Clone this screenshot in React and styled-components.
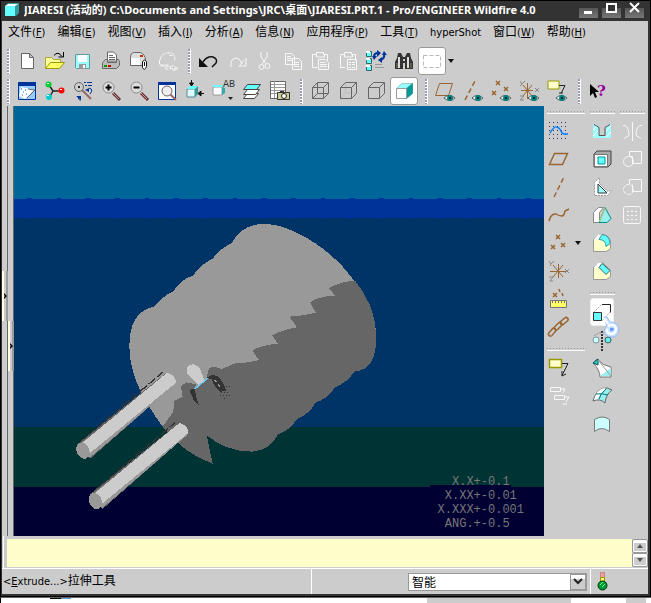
import React from 'react';
import styled, { createGlobalStyle, css } from 'styled-components';

const GlobalStyle = createGlobalStyle`
    * {
        box-sizing: border-box;
    }
    body {
        margin: 0;
        background: #fff;
        color: #000;
        font-family: "DejaVu Sans Condensed", "Noto Sans", "Noto Sans CJK SC", sans-serif;
        font-size: 12px;
    }
    button {
        margin: 0;
        padding: 0;
        border: 0;
        background: none;
        color: inherit;
        font: inherit;
    }
`;

const Page = styled.div`
    display: flex;
    flex-direction: column;
    min-height: 100vh;
    border-bottom: 1px solid #000;
`;
const Window = styled.div`
    display: flex;
    flex: 1;
    flex-direction: column;
    background: #ccc;
    border: solid #333;
    border-width: 0 3px 3px 2px;
    outline: 1px solid #000;
    outline-offset: -1px;
`;
const Desktop = styled.div`
    display: flex;
    height: 7px;
    padding-left: 49px;
    border-top: 1px solid #666;
    border-left: 1px solid #000;
`;
const DesktopMark = styled.i`
    width: ${p => p.w}px;
    height: ${p => p.h}px;
    margin-right: ${p => p.gap}px;
    background: ${p => p.color};
`;
// latin letters run one size under the chinese ones
const Latin = styled.span`
    font-size: 11px;
`;

/* title */
const TitleBar = styled.header`
    display: flex;
    align-items: center;
    height: 21px;
    padding: 0 4px 3px 2px;
    background: #333;
    border-top: 1px solid #000;
    color: #fff;
`;
const Title = styled.h1`
    flex: 1;
    margin: 0 0 0 4px;
    overflow: hidden;
    white-space: nowrap;
    font-family: "Noto Sans", "Noto Sans CJK SC", sans-serif;
    font-size: 11px;
    line-height: 16px;
    font-weight: bold;
`;
const WindowButtons = styled.div`
    display: flex;
    gap: 4px;
`;
const WindowButton = styled.button`
    width: 19px;
    height: 17px;
    background: linear-gradient(#333 7px, #555 7px, #777);
    svg {
        display: block;
    }
`;

/* menu */
const MenuBar = styled.nav`
    display: flex;
    gap: 12px;
    height: 25px;
    padding: 0 6px 3px;
`;
const MenuItem = styled.button`
    white-space: nowrap;
    line-height: 20px;
`;

/* toolbars */
const ToolRow = styled.div`
    display: flex;
    align-items: center;
    height: 30px;
`;
const Grip = styled.i`
    flex: none;
    background: radial-gradient(circle at 1px 1px, #99b 1px, #fff 1px) 0 0 / 3px 3px;
    ${p => p.flat ? css`
        height: 3px;
        margin: ${p.first ? 5 : 7}px 0 3px;
        border-bottom: 1px solid #fff;
        background: repeating-linear-gradient(90deg, #99a 0 1px, #ccc 1px 3px) 0 0 / 100% 1px no-repeat;
    ` : css`
        width: 3px;
        height: 25px;
        margin: 0 3px 0 ${p.first ? 5 : 7}px;
    `}
`;
const Tool = styled.button`
    position: relative;
    display: flex;
    flex: none;
    align-items: center;
    justify-content: center;
    width: ${p => p.$narrow ? 24 : 28}px;
    height: 28px;
    ${p => p.$active && css`
        background: #fff;
        border: 1px solid ${p.$narrow ? '#eee' : '#999'};
        border-radius: 3px;
    `}
    svg {
        flex: none;
    }
`;
const DropArrow = styled.button`
    width: 10px;
    height: 28px;
    svg {
        display: block;
        margin: auto;
    }
`;
const Pointer = styled.svg`
    position: absolute;
    top: 17px;
    left: 10px;
    z-index: 1;
`;

/* middle */
const Main = styled.main`
    display: flex;
    flex: 1;
    min-height: 430px;
`;
const Sash = styled.div`
    flex: none;
    width: 6px;
    padding-top: ${p => p.top}px;
    border-right: 1px solid #666;
`;
const SashButton = styled.button`
    display: flex;
    align-items: center;
    width: 6px;
    height: 50px;
    background: #ccc;
    border-left: 2px solid #ffffe6;
    border-right: 2px solid #999;
    svg {
        flex: none;
    }
`;
const Viewport = styled.section`
    position: relative;
    flex: 1;
    min-width: 0;
    background: #000033;
`;
const Scene = styled.svg`
    display: block;
    width: 100%;
    height: 100%;
    shape-rendering: crispEdges;
`;
const Tolerance = styled.pre`
    position: absolute;
    right: 20px;
    bottom: 5px;
    margin: 0;
    color: #777;
    font: 12px/14px "Liberation Mono", monospace;
    text-align: center;
`;
const Feature = styled.aside`
    display: grid;
    grid-template-columns: 38px 25px 25px;
    align-content: start;
    gap: 5px;
    width: 104px;
    padding-left: 3px;
`;
const ToolColumn = styled.div`
    display: flex;
    flex-direction: column;
`;
const ToolLine = styled.div`
    display: flex;
    gap: 2px;
`;

/* bottom */
const Message = styled.div`
    display: flex;
    height: 32px;
    padding: 3px 0 1px 5px;
    background: linear-gradient(90deg, #ccc 1px, #fff 1px, #fff 2px, #ccc 2px);
`;
const MessageText = styled.output`
    flex: 1;
    background: #ffffcc;
`;
const Scroll = styled.div`
    display: grid;
    grid-template-rows: 1fr 1fr;
    width: 16px;
`;
const ScrollButton = styled.button`
    display: flex;
    align-items: center;
    justify-content: center;
    background: linear-gradient(#fff 3px, #ccc 3px);
    border: 1px solid #999;
    border-radius: 2px;
    box-shadow: inset 0 0 0 1px #fff;
`;
const StatusBar = styled.footer`
    display: flex;
    height: 26px;
    border-top: 1px solid #fff;
    line-height: 24px;
`;
const Hint = styled.div`
    flex: 0 0 48%;
    border-right: 1px solid #fff;
    padding-left: 1px;
`;
const FilterBox = styled.div`
    display: flex;
    flex: 1;
    align-items: center;
    justify-content: flex-end;
    padding-right: 3px;
    border-right: 1px solid #fff;
`;
const FilterField = styled.div`
    position: relative;
    width: 179px;
    height: 18px;
`;
const Filter = styled.select`
    display: block;
    width: 100%;
    height: 18px;
    padding: 0 3px;
    appearance: none;
    background: #fff;
    border: 1px solid #999;
    border-radius: 0;
    color: #000;
    font: 12px/14px "Noto Sans CJK SC", sans-serif;
`;
const FilterArrow = styled.span`
    position: absolute;
    top: 1px;
    right: 1px;
    display: flex;
    align-items: center;
    justify-content: center;
    width: 16px;
    height: 16px;
    background: linear-gradient(#fff 4px, #ccc 4px);
    border: 1px solid #999;
    pointer-events: none;
`;
const Light = styled.div`
    width: 57px;
    padding: 1px 0 0 2px;
`;

const G = '#666';
const W = '#f8f8f8';
const B = '#996633';

const Eye = () => (
    <g>
        <path d="M11 19q5-5 11 0q-5 5-11 0z" fill="#fff" stroke="#555" />
        <circle cx="17" cy="19" r="3" fill="#008080" />
        <path d="M16 18h2v2h-2z" fill="#033" />
    </g>
);
const Lens = () => (
    <g>
        <path d="M14 14l7 7" stroke="#633" strokeWidth="3" />
        <path d="M14 14l6 6" stroke="#c99" />
        <circle cx="9.500" cy="8.500" r="5.500" fill="#ddd" stroke="#888" />
    </g>
);
const wire = 'M4.5 8.5h11v11h-11zM4.5 8.5l5-5h11l-5 5M20.5 3.5v11l-5 5';

const icons = {
    new: <path d="M6.5 4.5h8l4 4v11h-12zM14.5 4.5v4h4" fill="#fff" stroke={G} />,
    open: <g>
        <path d="M2.5 19.5v-11h6l2 2h7v4" fill="#ffff99" stroke="#aa3" />
        <path d="M2.5 19.5l5-6h14l-5 6z" fill="#ffff66" stroke="#990" />
        <path d="M11 6.500q4-5 8 1M20.500 3v5h-5" fill="none" stroke="#000" />
    </g>,
    save: <g>
        <path d="M4.5 5.5h14v14h-13l-1-1z" fill="#99ffff" stroke="#699" />
        <path d="M7 6h9v7H7z" fill="#fff" />
        <path d="M8 15h7v5H8z" fill="#999" />
        <path d="M12 16h2v3h-2z" fill="#fff" />
    </g>,
    print: <g>
        <path d="M8.500 12v-9h6l3 3v6z" fill="#fff" stroke={G} />
        <path d="M10 6.500h4M10 8.500h6M10 10.500h6" stroke={G} />
        <path d="M3.500 13.500l3-3h2v3h9v-3h2l1 2v4l-3 3h-14z" fill="#bbb" stroke={G} />
        <path d="M5 16h3v2H5z" fill="#090" /><path d="M9 16h3v2H9z" fill="#c00" />
    </g>,
    mail: <g>
        <path d="M3.500 16.500v-8q0-5 4-5h6q5 2 5 8v5z" fill="#ddd" stroke={G} />
        <path d="M4 9h9v7H4z" fill="#fff" /><path d="M13 6h3v2h-3z" fill="#c30" />
        <path d="M15.500 12.500q2-3 4 0v5q-2 5-4 1z" fill="#fff" stroke="#111" />
        <path d="M17.500 13v4" stroke="#111" />
    </g>,
    mailLink: <path d="M4.500 11v5h9M5 11q1-6 7-7h5q3 2 3 7M14.500 6.500h3M6 17h4M10 19q3-3 6 0q-3 3-6 0M15 18q3-3 6 1q-3 2-6-1M17 21h5v-3" fill="none" stroke={W} strokeDasharray="4 1" />,
    undo: <g>
        <path d="M3 9v9h9z" fill="#111" />
        <path d="M7 13q4-6 10-5q5 2 3 6l-4 4" fill="none" stroke="#111" strokeWidth="1.500" />
    </g>,
    redo: <path d="M7 18v-5q1-4 5-4q4 0 6 6M22 9v8h-8M20 11l-4 5" fill="none" stroke={W} />,
    cut: <g fill="none" stroke={W}>
        <path d="M9 3v5l5 7M15 3v5l-5 7" />
        <circle cx="9.500" cy="18" r="2.500" /><circle cx="15.500" cy="17" r="2.500" />
    </g>,
    copy: <path d="M5.500 4.500h6l3 3v8h-9zM7 7.500h4M7 9.500h5M7 11.500h5M12.500 9.500h6l3 3v8h-9zM14 13.500h5M14 15.500h5M14 17.500h5" fill="#ccc" stroke={W} />,
    paste: <path d="M9 18.500H4.500v-13h4v-2h7v2h4v6M8.500 5v3h8v-3M10.500 10.500h7l3 3v7h-10zM12 13.500h5M12 15.500h7M12 17.500h7" fill="#ccc" stroke={W} />,
    pasteSpecial: <path d="M9 18.500H4.500v-13h4v-2h7v2h4v6M8.500 5v3h8v-3M11.500 10.500h9v10h-9zM13 13.500h2M16 13.500h3M13 15.500h2M16 15.500h3M13 18.500h2M16 18.500h3" fill="#ccc" stroke={W} />,
    regen: <g>
        {[2, 9, 16].map(y => (
            <g key={y}>
                <path d={`M2.500 ${y + .5}h5v5h-5z`} fill="#6ff" stroke="#366" />
                <path d={`M2 ${y}h4v2H2z`} fill="#fff" />
            </g>
        ))}
        <path d="M10 8q0-4 4-4M20 5q1 4-3 6" fill="none" stroke="#003399" strokeWidth="2" />
        <path d="M13 1l4 3-4 4zM8 7h5l-3 4zM18 8v6l-4-3zM18 6h5l-3-4z" fill="#003399" />
        <path d="M11 15.500h7M11 18.500h9" stroke="#999" />
    </g>,
    find: <g>
        <path d="M5 9l1-5h3l2 4v12H3v-7zM19 9l-1-5h-3l-2 4v12h8v-7z" fill="#333" />
        <path d="M7 8v11M16 8v11" stroke="#ddd" strokeWidth="2" />
        <path d="M5 14v5M19 14v5" stroke="#886" />
        <path d="M10 8h4v6h-4z" fill="#333" /><path d="M11 10h2v2h-2z" fill="#ccc" />
    </g>,
    pick: <path d="M3.500 6.500h17v12h-17z" fill="none" stroke="#bbb" strokeDasharray="4 2" />,
    sketchView: <g>
        <path d="M3.500 3.500h17v17h-17z" fill="#99ccff" stroke="#003399" />
        <path d="M3 3h18v4H3z" fill="#003399" />
        <path d="M6 8l5 1 8 2-9 9-6-3z" fill="#fff" />
        <path d="M6 10h1M8 13h1M10 11h1M7 16h1M11 15h1" stroke="#06c" />
        <path d="M13 10l7 1-8 8" fill="none" stroke="#666" />
    </g>,
    orient: <g>
        <path d="M6 6l4 6h9M10 12l-4 7" fill="none" stroke="#222" strokeWidth="1.500" />
        <circle cx="5.500" cy="5.500" r="3" fill="#0c3" /><path d="M4 4h2v1H4z" fill="#fff" />
        <circle cx="18.500" cy="11.500" r="3" fill="#f00" /><path d="M17 10h2v1h-2z" fill="#fff" />
        <circle cx="6" cy="18" r="3" fill="#0cc" /><path d="M4 16h2v1H4z" fill="#fff" />
    </g>,
    spin: <g>
        <path d="M11 11l9 9" stroke="#966" strokeWidth="2" />
        <circle cx="8" cy="8" r="4.500" fill="#ccc" stroke={G} /><path d="M7 7h2v2H7z" fill="#222" />
        <path d="M13 3.500h2M16 3.500h5M14 6.500h2M17 6.500h4" stroke="#003399" />
        <path d="M18 9q5 1 1 6M8 17q-2 4 2 4" fill="none" stroke="#003399" />
        <path d="M14 11l4-2v4zM5 17h5v4z" fill="#003399" />
    </g>,
    zoomIn: <g><Lens /><path d="M6.500 8.500h6M9.500 5.500v6" stroke="#000" strokeWidth="2" /></g>,
    zoomOut: <g><Lens /><path d="M6.500 8.500h6" stroke="#000" strokeWidth="2" /></g>,
    refit: <g>
        <path d="M3.500 4h17v16.500h-17z" fill="#fff" stroke="#003399" />
        <path d="M3 3h18v3H3z" fill="#003399" />
        <path d="M15 15l6 6" stroke="#966" strokeWidth="2" />
        <circle cx="12" cy="12" r="5" fill="#eee" stroke={G} />
    </g>,
    annot: <g>
        <path d="M4 10h8v8H4z" fill="#dff" stroke="#588" />
        <path d="M4 10l3-3h8l-3 3z" fill="#6ff" /><path d="M12 10l3-3v8l-3 3z" fill="#399" />
        <path d="M8.500 1v4M6.500 4l2 3 2-3zM21 14.500h-4M18 12l-3 2.500 3 2.500z" stroke="#111" fill="#111" />
    </g>,
    views: <g>
        <path d="M2 8h9v8H2z" fill="#fff" stroke="#999" /><path d="M2 6h11l-2 2H2z" fill="#6ff" />
        <path d="M11 8l3 1v5l-3 2z" fill="#3aa" />
        <text x="12" y="8" fill="#333" fontFamily="Liberation Mono" fontSize="10">AB</text>
        <path d="M17 18h5l-2.500 3z" fill="#222" />
    </g>,
    layers: <g stroke="#444">
        <path d="M4.500 19.500l4-5h11l-4 5z" fill="#fff" />
        <path d="M4.500 15.500l4-5h12l-4 5z" fill="#fff" />
        <path d="M4.500 10.500l4-5h13l-4 5z" fill="#6ff" />
    </g>,
    viewMgr: <g>
        <path d="M3.500 2.500h15v17h-15z" fill="#fff" stroke={G} />
        <path d="M4 5.500h14M4 8.500h14M4 11.500h14M4 14.500h8M7.500 2v17" stroke="#999" />
        <path d="M10.500 13.500h12v7h-12z" fill="#cccc99" stroke="#333" />
        <path d="M13 12h4v2h-4z" fill="#333" />
        <circle cx="17" cy="17" r="2.500" fill="#fff" stroke="#222" />
    </g>,
    wireframe: <path d={wire + 'M9.500 3.500v11h11M9.500 14.500l-5 5'} fill="none" stroke={G} />,
    hidden: <g fill="none">
        <path d="M9.500 4v10h11M9 15l-4 4" stroke="#bbb" /><path d={wire} stroke={G} />
    </g>,
    noHidden: <path d={wire} fill="none" stroke={G} />,
    shaded: <g>
        <path d="M4.500 9.500l5-5h11l-5 5z" fill="#9ff" stroke="#9cc" />
        <path d="M14.500 9.500l6-5v10l-6 5z" fill="#099" stroke="#399" />
        <path d="M4.500 9.500h10v10h-10z" fill="#fff" stroke="#999" />
    </g>,
    planeEye: <g><path d="M2.500 16.500l4-12h13l-4 12z" fill="none" stroke={B} /><Eye /></g>,
    axisEye: <g><path d="M4 21L14 2" stroke={B} strokeWidth="1.500" strokeDasharray="5 3" /><Eye /></g>,
    pointEye: <g><path d="M7 2l4 4M11 2l-4 4M3 12l4 4M7 12l-4 4M15 8l4 4M19 8l-4 4" stroke={B} strokeWidth="1.500" /><Eye /></g>,
    csysEye: <g>
        <path d="M10.500 4v16M4 11.500h12M6 6l9 11M15 6L6 17" stroke={B} />
        <path d="M3 2l2 3 3-3M5 5l-2 2M18 9l4 4M22 9l-4 4M3 17h4l-4 4h4" fill="none" stroke="#888" /><Eye />
    </g>,
    noteEye: <g>
        <path d="M3 2h11v8H3z" fill="#ffffcc" stroke="#990" />
        <path d="M14 6.500h6l-4 8M14 14h4" fill="none" stroke="#222" /><Eye />
    </g>,
    help: <g>
        <path d="M4 5v12l3-3 2 5 2-1-2-5h4z" fill="#000" />
        <text x="11" y="17" fill="#909" fontFamily="DejaVu Serif" fontWeight="bold" fontSize="15">?</text>
    </g>,
    sketch: <g>
        {[3, 7, 11, 15, 19].map(y => (
            <path key={y} d={`M2 ${y}.500h20`} stroke="#336" strokeDasharray="1 3" />
        ))}
        <path d="M3 14q4-7 7-6q3 1 5 6l2 1h4" fill="none" stroke="#0080ff" strokeWidth="1.500" />
    </g>,
    plane: <path d="M2.500 17.500l5-11h13l-5 11z" fill="none" stroke={B} strokeWidth="1.500" />,
    axis: <path d="M7 22L17 2" stroke={B} strokeWidth="1.500" strokeDasharray="5 3" />,
    curve: <path d="M2 18q2-8 7-7q3 2 6 2q2 0 3-5l4-2" fill="none" stroke={B} strokeWidth="1.500" />,
    points: <path d="M9 4l4 4M13 4l-4 4M4 14l4 4M8 14l-4 4M14 12l4 4M18 12l-4 4" stroke={B} strokeWidth="1.500" />,
    csys: <g>
        <path d="M11.500 5v14M3 12.500h16M6 6l10 12M16 6L6 18" stroke={B} />
        <path d="M2 2l2 3 3-3M4 5l-1 2M18 10l4 4M22 10l-4 4M2 18h4l-3 4h3" fill="none" stroke="#888" />
    </g>,
    analysis: <g>
        <path d="M6 6l4 4M10 6l-4 4M12 2l1 3M15 6l1 3" stroke={B} strokeWidth="1.500" />
        <path d="M3.500 13.500h16v7h-16z" fill="#ffff66" stroke="#777" />
        <path d="M5.500 14v2M8.500 14v2M11.500 14v2M14.500 14v2M17.500 14v2" stroke="#777" />
    </g>,
    chain: <g fill="none" stroke={B} strokeWidth="1.500">
        <rect x="1" y="15" width="9" height="4" rx="2" transform="rotate(-50 5.500 17.500)" />
        <rect x="7" y="9" width="9" height="4" rx="2" transform="rotate(-45 11.500 11.500)" />
        <rect x="13" y="4" width="9" height="4" rx="2" transform="rotate(-40 17.500 6.500)" />
    </g>,
    note: <g>
        <path d="M2.500 3.500h12v8h-12z" fill="#ffffcc" stroke="#990" strokeWidth="1.500" />
        <path d="M15 7.500h6l-6 12M15 15v5l4-2" fill="none" stroke="#222" />
    </g>,
    notes: <path d="M3.500 3.500h10v4h-10zM14 5h4l-2 4M7.500 11.500h10v4h-10zM18 13h4l-3 5M16 20h4" fill="none" stroke={W} />,
    hole: <g>
        <path d="M3 5h18v14H3z" fill="#9ff" />
        <path d="M3 11l4-4M3 17l5-5M16 12l5-5M16 18l5-5" stroke="#fff" />
        <path d="M4 5h16l-4 3v9H9V8z" fill="#ccc" />
        <path d="M4 5.500l5 3v8h6v-8l5-3" stroke="#555" />
    </g>,
    shell: <g>
        <path d="M4 7l3-3h14v13l-3 3H4z" fill="#aaa" stroke="#444" />
        <path d="M4.500 7.500h13v12h-13z" fill="#fff" stroke="#777" />
        <path d="M8 10h7v7H8z" fill="#6ff" stroke="#099" />
    </g>,
    rib: <g>
        <path d="M4.500 20.500v-13l5-5v6l8 8 5-1-5 5z" fill="#fff" stroke="#999" strokeDasharray="2 1" />
        <path d="M8 9l9 9H8z" fill="#9ff" stroke="#333" />
    </g>,
    draft: <g>
        <path d="M3.500 9.500l5-5h5l-4 5v10h-6z" fill="#fff" stroke="#888" />
        <path d="M9 19.500l6-15 6 11-4 4z" fill="#9ee" stroke="#088" />
        <path d="M15 5l-6 14" stroke="#cc6" />
    </g>,
    round: <g>
        <path d="M3.500 20.500v-12l5-5h4q8 1 8 9v5l-4 3z" fill="#ffffcc" stroke="#999" />
        <path d="M4 8.500l4-5h4l-3 5z" fill="#fff" />
        <path d="M12 3.500q8 1 8 9l-4 3q0-7-7-7z" fill="#6ff" stroke="#399" />
    </g>,
    chamfer: <g>
        <path d="M3.500 20.500v-12l5-5h4l8 8v6l-4 3z" fill="#ffffcc" stroke="#999" />
        <path d="M4 8.500l4-5h4l-3 5z" fill="#fff" />
        <path d="M12 4.500l8 7-4 4-7-7z" fill="#6ff" stroke="#366" />
    </g>,
    extrude: <g>
        <path d="M3.500 12.500l8-8h9v7l-8 9z" fill="#fff" stroke="#aaa" strokeDasharray="2 1" />
        <path d="M12 4.500h8.500v8" stroke="#222" />
        <path d="M3.500 12.500h8v8h-8z" fill="#6ff" stroke="#333" />
    </g>,
    revolve: <g>
        <path d="M12 3v20" stroke="#000" strokeDasharray="2 1" strokeWidth="1.500" />
        <circle cx="6" cy="12" r="3" fill="#cff" stroke="#799" /><circle cx="18" cy="12" r="3" fill="#6ee" stroke="#366" />
        <path d="M4 8q8-7 16 0" stroke="#888" strokeDasharray="2 1" />
    </g>,
    sweep: <g>
        <path d="M3 7l4-4q6 7 14 8v10H10q0-7-7-14z" fill="#fff" stroke="#777" />
        <path d="M3 7l5-4v6z" fill="#3cc" stroke="#055" /><path d="M10 20l11-8v8z" fill="#9ee" />
        <path d="M8 4l13 16" stroke="#999" />
    </g>,
    boundary: <g>
        <path d="M3 17q4-14 14-13l5 2q-6 4-7 13q-5-5-12-2z" fill="#9ee" stroke="#666" />
        <path d="M4 16q3-11 10-12l2 1q-6 4-8 10z" fill="#fff" /><path d="M6 10q6-1 12 1M16 5q-6 5-7 10" stroke="#077" />
    </g>,
    style: <path d="M4.500 19.500v-12q8-5 15 0v12q-8-6-15 0z" fill="#cff" stroke="#777" />,
    mirror: <path d="M12.500 3v19M3 6.500h2q4 2 4 10l-5 3M22 6.500h-2q-4 2-4 10l5 3" fill="none" stroke={W} />,
    merge: <g fill="none" stroke={W}><path d="M9.500 4.500h12v12h-9v-7h-3z" /><circle cx="8.500" cy="14.500" r="5" /></g>,
    trim: <g fill="none" stroke={W}><path d="M9.500 9v-4.500h12v12h-9v-7" /><circle cx="8.500" cy="14.500" r="5" strokeDasharray="4 1" /></g>,
    pattern: <g fill="none" stroke={W}>
        <rect x="3.500" y="3.500" width="17" height="17" rx="2" />
        <path d="M7 8.500h11M7 12.500h11M7 16.500h11" strokeDasharray="2 2" />
    </g>,
};

const Icon = ({ name }) => (
    <svg width="24" height="24" viewBox="0 0 24 24" fill="none" aria-hidden="true">{icons[name]}</svg>
);

const Triangle = ({ up, color = '#111' }) => (
    <svg width="6" height="4" viewBox="0 0 6 4" aria-hidden="true">
        <path d={up ? 'M0 4h6l-3-4z' : 'M0 0h6l-3 4z'} fill={color} />
    </svg>
);

const Chevron = () => (
    <svg width="3" height="6" viewBox="0 0 3 6" aria-hidden="true">
        <path d="M0 0l3 3-3 3V4l1-1-1-1z" />
    </svg>
);

const Hand = () => (
    <Pointer width="20" height="22" viewBox="0 0 20 22" aria-hidden="true">
        <path d="M3 1l3 0 3 5q8 0 9 7q-1 8-7 8q-7 0-8-7l3-4z" fill="#cce6ff" stroke="#99bbff" />
        <path d="M3 2l4 6M7 10q6-3 8 2q0 6-5 6q-5-1-4-5" fill="none" stroke="#fff" strokeWidth="2" />
        <path d="M9 12q3-1 4 1q-1 3-4 2z" fill="#6699ff" />
    </Pointer>
);

const menus = [
    ['文件', 'F'], ['编辑', 'E'], ['视图', 'V'], ['插入', 'I'], ['分析', 'A'], ['信息', 'N'],
    ['应用程序', 'P'], ['工具', 'T'], ['hyperShot'], ['窗口', 'W'], ['帮助', 'H'],
];

// '|' is a grip between two groups
const fileTools = ['new', 'open', 'save', 'print', 'mail', 'mailLink', '|', 'undo', 'redo', 'cut', 'copy', 'paste', 'pasteSpecial', 'regen', 'find', 'pick'];
const viewTools = ['sketchView', 'orient', 'spin', 'zoomIn', 'zoomOut', 'refit', 'annot', 'views', 'layers', 'viewMgr', '|', 'wireframe', 'hidden', 'noHidden', 'shaded', '|', 'planeEye', 'axisEye', 'pointEye', 'csysEye', 'noteEye', '|', 'help'];
const datumTools = ['sketch', 'plane', 'axis', 'curve', 'points', 'csys', 'analysis', 'chain', '|', 'note', 'notes'];
const featureTools = ['hole', 'shell', 'rib', 'draft', 'round', 'chamfer', '|', 'extrude', 'revolve', 'sweep', 'boundary', 'style'];
const editTools = ['mirror', 'merge', 'trim', 'pattern'];
const active = ['pick', 'shaded', 'extrude'];

const Tools = ({ list, flat }) => list.map((name, i) => {
    if (name === '|') return <Grip key={i} flat={flat} />;
    const tool = (
        <Tool key={i} aria-label={name} $narrow={flat} $active={active.includes(name)}>
            <Icon name={name} />
            {name === 'extrude' && <Hand />}
        </Tool>
    );
    if (name !== 'points') return tool;
    return (
        <ToolLine key={i}>
            {tool}
            <DropArrow aria-label="points menu"><Triangle /></DropArrow>
        </ToolLine>
    );
});

const Rod = ({ x, y }) => (
    <g transform={`translate(${x} ${y})`}>
        <path d="M-10-24L240-236M262 -196L210 -150" stroke="#333" strokeWidth="4" strokeDasharray="26 8" />
        <path d="M-18-18L245-230l30 32L22 24z" fill="#666" />
        <path d="M-14-15L252-230l24 32L22 20z" fill="#999" />
        <path d="M-6-20L252-234q26 6 27 30L18 10z" fill="#ccc" />
        <ellipse cx="0" cy="0" rx="19" ry="25" transform="rotate(-25)" fill="#999" />
    </g>
);

const Model = () => (
    <Scene viewBox="0 0 1590 1290" preserveAspectRatio="xMidYMid slice" role="img" aria-label="JIARESI.PRT">
        <path d="M0 0h1590v279H0z" fill="#006699" />
        <path d="M0 279h1590v57H0z" fill="#003399" />
        <path d="M0 336h1590v627H0z" fill="#003366" />
        <path d="M0 963h1590v180H0z" fill="#003333" />
        <path d="M0 1143h1590v147H0z" fill="#000033" />
        <path d="M40 277h1550" stroke="#003399" strokeWidth="4" strokeDasharray="14 74" />
        <path d="M40 338h1550" stroke="#003399" strokeWidth="4" strokeDasharray="6 82" />
        <path d="M1248 1140h243" stroke="#000033" strokeWidth="6" />
        <g transform="translate(288 252)">
            <path d="M470 102C540 105 640 165 700 232C745 285 797 350 798 430C800 490 790 520 765 535Q750 543 733 545Q715 575 675 592Q655 625 617 638Q600 670 560 688Q540 720 504 733C490 765 460 783 425 785C370 785 325 765 290 736L308 821C250 800 200 765 158 710C110 645 58 560 58 470C60 400 75 365 135 348Q155 320 190 304Q210 270 250 256Q270 225 308 206Q330 175 365 160C385 120 420 100 470 102z" fill="#999" />
            <path d="M735 272Q690 275 657 294L675 317Q620 320 600 338L618 368Q580 378 538 380L561 412Q515 420 486 436L504 461Q450 466 427 482L447 510Q410 520 375 520L335 537L318 531L297 533L290 565L254 597L258 583L228 577L213 590L218 620L192 633L190 665L158 710C200 765 250 800 308 821L290 736C325 765 370 785 425 785C460 783 490 765 504 733Q540 720 560 688Q600 670 617 638Q655 625 675 592Q715 575 733 545Q750 543 765 535C790 520 800 490 798 430C797 370 770 315 735 272z" fill="#666" />
            <path d="M231 535Q238 520 255 524L268 532L284 572L265 584L232 550z" fill="#ccc" />
            <path d="M238 600L255 595L257 615L267 648L250 628z" fill="#333" />
            <path d="M291 563Q305 550 325 560Q343 580 349 603L332 605Q312 590 305 568z" fill="#333" />
            <path d="M314 570l6 6M324 582l5 8" stroke="#999" strokeWidth="3" />
            <path d="M330 616h30M334 607h24M347 590h16M342 625h8" stroke="#333" strokeWidth="3" strokeDasharray="3 6" />
            <path d="M254 597L293 565" stroke="#66ccff" strokeWidth="4" />
        </g>
        <Rod x="207" y="1034" />
        <Rod x="244" y="1185" />
    </Scene>
);

const App = () => (
    <Page>
        <GlobalStyle />
        <Window>
            <TitleBar>
                <svg width="16" height="16" viewBox="0 0 16 16" aria-hidden="true">
                    <path d="M1 4l3-3h11v10l-3 3H1z" fill="#399" />
                    <path d="M1 4h10v10H1z" fill="#6ff" /><path d="M1 4l3-2h10l-3 2z" fill="#fff" />
                </svg>
                <Title>JIARESI (活动的) C:\Documents and Settings\JRC\桌面\JIARESI.PRT.1 - Pro/ENGINEER Wildfire 4.0</Title>
                <WindowButtons>
                    {['M5 11.500h8', 'M5 3h9v8H5z', 'M5 2l9 9M14 2l-9 9'].map((d, i) => (
                        <WindowButton key={d} aria-label={['minimize', 'maximize', 'close'][i]}>
                            <svg width="19" height="17" viewBox="0 0 19 17">
                                <path d={d} fill={i === 1 ? '#333' : 'none'} stroke="#fff" strokeWidth={i ? 2 : 3} />
                            </svg>
                        </WindowButton>
                    ))}
                </WindowButtons>
            </TitleBar>
            <MenuBar>
                {menus.map(([label, key]) => (
                    <MenuItem key={label}>
                        {key ? <>{label}<Latin>(<u>{key}</u>)</Latin></> : <Latin>{label}</Latin>}
                    </MenuItem>
                ))}
            </MenuBar>
            <ToolRow>
                <Grip first />
                <Tools list={fileTools} />
                <DropArrow aria-label="selection menu"><Triangle /></DropArrow>
            </ToolRow>
            <ToolRow>
                <Grip first />
                <Tools list={viewTools} />
            </ToolRow>
            <Main>
                <Sash top={165}><SashButton aria-label="show browser"><Chevron /></SashButton></Sash>
                <Sash top={215}><SashButton aria-label="show model tree"><Chevron /></SashButton></Sash>
                <Viewport>
                    <Model />
                    <Tolerance>{'X.X+-0.1\nX.XX+-0.01\nX.XXX+-0.001\nANG.+-0.5 '}</Tolerance>
                </Viewport>
                <Feature>
                    <ToolColumn><Grip flat first /><Tools flat list={datumTools} /></ToolColumn>
                    <ToolColumn><Grip flat first /><Tools flat list={featureTools} /></ToolColumn>
                    <ToolColumn><Grip flat first /><Tools flat list={editTools} /></ToolColumn>
                </Feature>
            </Main>
            <Message>
                <MessageText />
                <Scroll>
                    <ScrollButton aria-label="up"><Triangle up color="#555" /></ScrollButton>
                    <ScrollButton aria-label="down"><Triangle color="#555" /></ScrollButton>
                </Scroll>
            </Message>
            <StatusBar>
                <Hint><Latin>&lt;<u>E</u>xtrude...&gt;</Latin>拉伸工具</Hint>
                <FilterBox>
                    <FilterField>
                        <Filter aria-label="filter"><option>智能</option></Filter>
                        <FilterArrow>
                            <svg width="10" height="7" viewBox="0 0 10 7">
                                <path d="M1 1l4 4 4-4" fill="none" stroke="#222" strokeWidth="2" />
                            </svg>
                        </FilterArrow>
                    </FilterField>
                </FilterBox>
                <Light>
                    <svg width="20" height="22" viewBox="0 0 20 22" aria-label="regeneration status">
                        <path d="M7.500 2.500h4v5h-4z" fill="#f99" stroke="#b88" />
                        <path d="M7.500 7.500h4v4h-4z" fill="#ff6" stroke="#990" />
                        <circle cx="9.500" cy="15.500" r="4.500" fill="#093" stroke="#030" />
                        <path d="M7 15l3-3M9 17l3-3" stroke="#6f9" />
                    </svg>
                </Light>
            </StatusBar>
        </Window>
        <Desktop>
            <DesktopMark w={11} h={1} gap={0} color="#000" />
            <DesktopMark w={10} h={1} gap={356} color="#69c" />
            <DesktopMark w={144} h={5} gap={55} color="#ccc" />
            <DesktopMark w={20} h={5} gap={0} color="#ccc" />
        </Desktop>
    </Page>
);

export default App;
